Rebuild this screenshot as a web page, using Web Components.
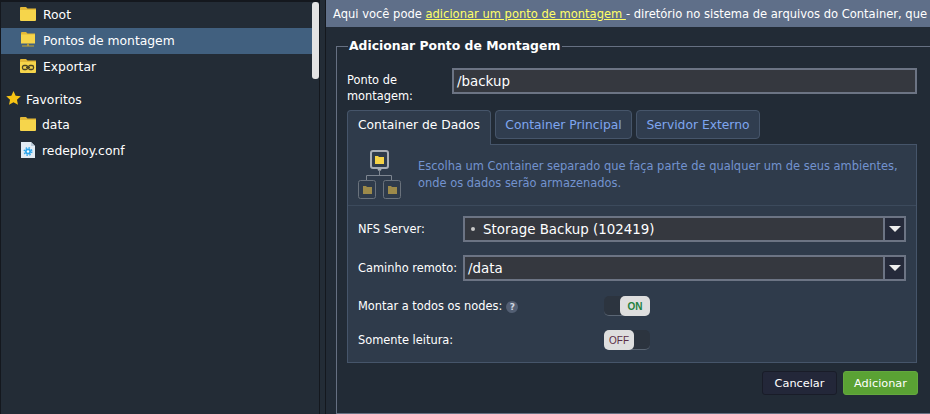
<!DOCTYPE html>
<html>
<head>
<meta charset="utf-8">
<style>
  html, body { margin:0; height:100%; overflow:hidden; background:#222b36; }
  body { font-family:"DejaVu Sans", sans-serif; font-size:12px; color:#fff; }
</style>
</head>
<body>
<mount-app></mount-app>

<script>
const folderSvg = () => `<svg width="16" height="14" viewBox="0 0 16 14"><path d="M0 1Q0 0 1 0H6L7.5 1.5H16V4H0Z" fill="#e4b936"/><path d="M0 3H16V13Q16 14 15 14H1Q0 14 0 13Z" fill="#f6d54b"/></svg>`;

class TreeItem extends HTMLElement {
  constructor(){
    super();
    this.attachShadow({ mode:"open" });
    this.shadowRoot.innerHTML = `
      <style>
        :host{ display:flex; align-items:center; height:26px; box-sizing:border-box; padding-left:var(--indent,19px); gap:var(--gap,7px); color:#fff; white-space:nowrap; }
        :host([selected]){ background:#41607f; }
        .ico{ display:flex; width:16px; height:16px; align-items:center; justify-content:center; }
      </style>
      <span class="ico"><slot name="icon"></slot></span><slot></slot>`;
  }
}

class SideTree extends HTMLElement {
  constructor(){
    super();
    this.attachShadow({ mode:"open" });
    this.shadowRoot.innerHTML = `
      <style>
        :host{ display:block; position:relative; width:320px; height:414px; flex:none; box-sizing:border-box; background:#232c36; border-top:2px solid #14181e; border-left:1px solid #14181e; border-right:1px solid #14181e; font-size:12.35px; }
        .thumb{ position:absolute; right:0; top:0; width:7px; height:77px; background:#e3e3e3; border-radius:3px; }
      </style>
      <slot></slot><div class="thumb"></div>`;
  }
}

class ToggleSwitch extends HTMLElement {
  constructor(){
    super();
    this.attachShadow({ mode:"open" });
    const on = this.hasAttribute("on");
    this.shadowRoot.innerHTML = `
      <style>
        :host{ display:flex; width:46px; height:20px; border-radius:5px; background:#2c343f; border-bottom:1px solid #5b6674; box-sizing:border-box; justify-content:${on?"flex-end":"flex-start"}; }
        b{ display:flex; width:30px; height:20px; flex:none; align-items:center; justify-content:center; background:#dedede; border-radius:5px; font:${on?"bold":"normal"} 10px "Liberation Sans",sans-serif; color:${on?"#23803f":"#5a2c44"}; }
      </style><b>${on?"ON":"OFF"}</b>`;
  }
}

class FieldBox extends HTMLElement {
  constructor(){
    super();
    this.attachShadow({ mode:"open" });
    const combo = this.hasAttribute("combo");
    this.shadowRoot.innerHTML = `
      <style>
        :host{ display:flex; height:26px; box-sizing:border-box; flex:1; min-width:0; border:2px solid #6c7484; background:#35383f; color:#fff; font-size:13.4px; align-items:center; }
        .v{ flex:1; padding-left:3px; white-space:nowrap; }
        .arrow{ width:19px; flex:none; height:100%; border-left:2px solid #6c7484; background:#252a3a; display:flex; align-items:center; justify-content:center; }
        .arrow i{ border:6px solid transparent; border-top:6px solid #eee; border-bottom:0; }
      </style>
      <div class="v"><slot></slot></div>${combo?'<div class="arrow"><i></i></div>':''}`;
  }
}

class MountTab extends HTMLElement {
  constructor(){
    super();
    this.attachShadow({ mode:"open" });
    this.shadowRoot.innerHTML = `
      <style>
        :host{ display:flex; align-items:center; justify-content:center; height:29px; box-sizing:border-box; border:1px solid #46556a; border-radius:4px; background:#303d4f; color:#7fa6f0; font-size:12.3px; white-space:nowrap; }
        :host([active]){ height:35px; padding-bottom:6px; background:#2f3b4b; color:#fff; border-bottom:none; border-radius:4px 4px 0 0; margin-bottom:-1px; z-index:1; }
      </style><slot></slot>`;
  }
}

class FormRow extends HTMLElement {
  constructor(){
    super();
    this.attachShadow({ mode:"open" });
    this.shadowRoot.innerHTML = `
      <style>
        :host{ display:flex; align-items:center; font-size:11.4px; color:#fff; }
        .l{ width:var(--label,105px); flex:none; white-space:nowrap; margin-top:var(--label-top,0); }
      </style><div class="l"><slot name="label"></slot></div><slot></slot>`;
  }
}

class MountApp extends HTMLElement {
  constructor(){
    super();
    this.attachShadow({ mode:"open" });
    this.shadowRoot.innerHTML = `
      <style>
        :host{ display:flex; height:414px; width:930px; overflow:hidden; background:#222b36; }
        .gutter{ width:6px; height:414px; box-sizing:border-box; background:#232c36; border-right:1px solid #14181e; flex:none; }
        .main{ width:604px; flex:none; background:#222b36; height:414px; overflow:hidden; }
        .hint{ height:27px; background:#5f6f89; padding-left:7px; display:flex; align-items:center; white-space:nowrap; font-size:11.53px; color:#fff; }
        .hint a{ color:#ffff66; text-decoration:underline; }
        fieldset{ margin:11px 0 0 10px; border:1px solid #667082; padding:14px 0 0 10px; height:376px; width:640px; box-sizing:border-box; min-width:0; }
        legend{ font-weight:bold; font-size:12.4px; line-height:16px; padding:0 2px 0 1px; margin-left:1px; }
        .content{ width:570px; }
        .ponto{ align-items:flex-start; height:36px; --label-top:4px; }
        .ponto span{ display:block; line-height:16px; }
        .tabs{ display:flex; gap:4px; margin-top:6px; height:34px; align-items:flex-start; }
        .panel{ box-sizing:border-box; border:1px solid #46556a; background:#2f3b4b; height:219px; display:flex; flex-direction:column; }
        .info{ display:flex; flex:none; height:61px; box-sizing:border-box; align-items:center; border-bottom:1px solid #3c4a5c; padding-left:10px; gap:16px; color:#7393cf; font-size:11.45px; line-height:17px; white-space:nowrap; }
        .info svg{ flex:none; }
        .rows{ padding:10px 10px 0 10px; display:flex; flex-direction:column; }
        .actions{ display:flex; justify-content:flex-end; gap:6px; margin:8px -1px 0 0; }
        button{ font:11.3px "DejaVu Sans",sans-serif; color:#fff; height:24px; border-radius:3px; width:75px; padding:0; }
        .cancel{ background:#232739; border:1px solid #191c28; }
        .add{ background:#5aa234; border:1px solid #64a83e; }
        .help{ display:inline-flex; width:12px; height:12px; border-radius:50%; background:#535f73; color:#cfd6e0; font-size:9px; align-items:center; justify-content:center; margin-left:4px; font-weight:bold; vertical-align:middle; }
        .dot{ display:inline-block; width:4px; height:4px; border-radius:50%; background:#c8c8c8; margin:0 8px 2px 3px; vertical-align:middle; }
      </style>
      <side-tree>
        <tree-item><span slot="icon">${folderSvg()}</span>Root</tree-item>
        <tree-item selected><span slot="icon"><svg width="16" height="16" viewBox="0 0 16 16"><path d="M1 1Q1 0 2 0H6L7.5 1.5H15V4H1Z" fill="#e4b936"/><path d="M1 2.5H15V11.5H1Z" fill="#f6d54b"/><path d="M7.2 11.5h1.6v2H14v1H2v-1h5.2Z" fill="#c9a52c"/></svg></span>Pontos de montagem</tree-item>
        <tree-item><span slot="icon"><svg width="16" height="14" viewBox="0 0 16 14"><path d="M0 1Q0 0 1 0H6L7.5 1.5H16V4H0Z" fill="#e4b936"/><path d="M0 3H16V13Q16 14 15 14H1Q0 14 0 13Z" fill="#f6d54b"/><rect x="2.5" y="6.5" width="5" height="4" rx="1.5" fill="none" stroke="#4a4426" stroke-width="1.3"/><rect x="8.5" y="6.5" width="5" height="4" rx="1.5" fill="none" stroke="#4a4426" stroke-width="1.3"/><path d="M6 8.5H10" stroke="#4a4426" stroke-width="1.3"/></svg></span>Exportar</tree-item>
        <tree-item style="--indent:4px;--gap:5px;margin-top:7px;height:25px"><span slot="icon"><svg width="15" height="14" viewBox="0 0 16 15"><path d="M8 0l2.3 5 5.5.6-4.1 3.7 1.1 5.4L8 12l-4.8 2.7 1.1-5.4L.2 5.6 5.7 5Z" fill="#f7c414"/></svg></span>Favoritos</tree-item>
        <tree-item style="--gap:6px"><span slot="icon">${folderSvg()}</span>data</tree-item>
        <tree-item style="--gap:6px"><span slot="icon"><svg width="14" height="16" viewBox="0 0 14 16"><path d="M0 0H10L14 4V16H0Z" fill="#e2ebf3"/><path d="M10 0V4H14Z" fill="#b9c8d6"/><circle cx="7" cy="9.5" r="3" fill="#2aa4ea"/><circle cx="7" cy="9.5" r="3.8" fill="none" stroke="#2aa4ea" stroke-width="1.4" stroke-dasharray="1.5 1.5"/><circle cx="7" cy="9.5" r="1.2" fill="#fff"/></svg></span>redeploy.conf</tree-item>
      </side-tree>
      <div class="gutter"></div>
      <div class="main">
        <div class="hint"><span>Aqui você pode <a>adicionar um ponto de montagem </a> - diretório no sistema de arquivos do Container, que e</span></div>
        <fieldset>
          <legend>Adicionar Ponto de Montagem</legend>
          <div class="content">
            <form-row class="ponto"><span slot="label">Ponto de<br>montagem:</span><field-box>/backup</field-box></form-row>
            <div class="tabs">
              <mount-tab active style="width:144px">Container de Dados</mount-tab>
              <mount-tab style="width:137px">Container Principal</mount-tab>
              <mount-tab style="width:124px">Servidor Externo</mount-tab>
            </div>
            <div class="panel">
              <div class="info">
                <svg width="44" height="50" viewBox="0 0 44 50"><rect x="13" y="1" width="17" height="17" rx="2" fill="none" stroke="#a7acb4" stroke-width="2"/><path d="M17 6h3l1 1h5v7h-9Z" fill="#f5d246"/><circle cx="21.5" cy="19" r="2" fill="#a7acb4"/><path d="M21.5 20v5M8.5 30v-4.500h25v4.500" fill="none" stroke="#7d8590"/><rect x=".5" y="30.500" width="17" height="18" rx="2" fill="none" stroke="#6a727c"/><rect x="25.500" y="30.500" width="17" height="18" rx="2" fill="none" stroke="#6a727c"/><path d="M5 36h3l1 1h5v7h-9ZM30 36h3l1 1h5v7h-9Z" fill="#9d8a4a"/></svg>
                <div>Escolha um Container separado que faça parte de qualquer um de seus ambientes,<br>onde os dados serão armazenados.</div>
              </div>
              <div class="rows">
                <form-row><span slot="label">NFS Server:</span><field-box combo><span class="dot"></span>Storage Backup (102419)</field-box></form-row>
                <form-row style="margin-top:13px"><span slot="label">Caminho remoto:</span><field-box combo>/data</field-box></form-row>
                <form-row style="margin-top:15px;--label:246px"><span slot="label">Montar a todos os nodes:<span class="help">?</span></span><toggle-switch on></toggle-switch></form-row>
                <form-row style="margin-top:14px;--label:246px"><span slot="label">Somente leitura:</span><toggle-switch></toggle-switch></form-row>
              </div>
            </div>
            <div class="actions"><button class="cancel">Cancelar</button><button class="add">Adicionar</button></div>
          </div>
        </fieldset>
      </div>`;
  }
}

customElements.define("tree-item", TreeItem);
customElements.define("side-tree", SideTree);
customElements.define("toggle-switch", ToggleSwitch);
customElements.define("field-box", FieldBox);
customElements.define("mount-tab", MountTab);
customElements.define("form-row", FormRow);
customElements.define("mount-app", MountApp);
</script>
</body>
</html>
